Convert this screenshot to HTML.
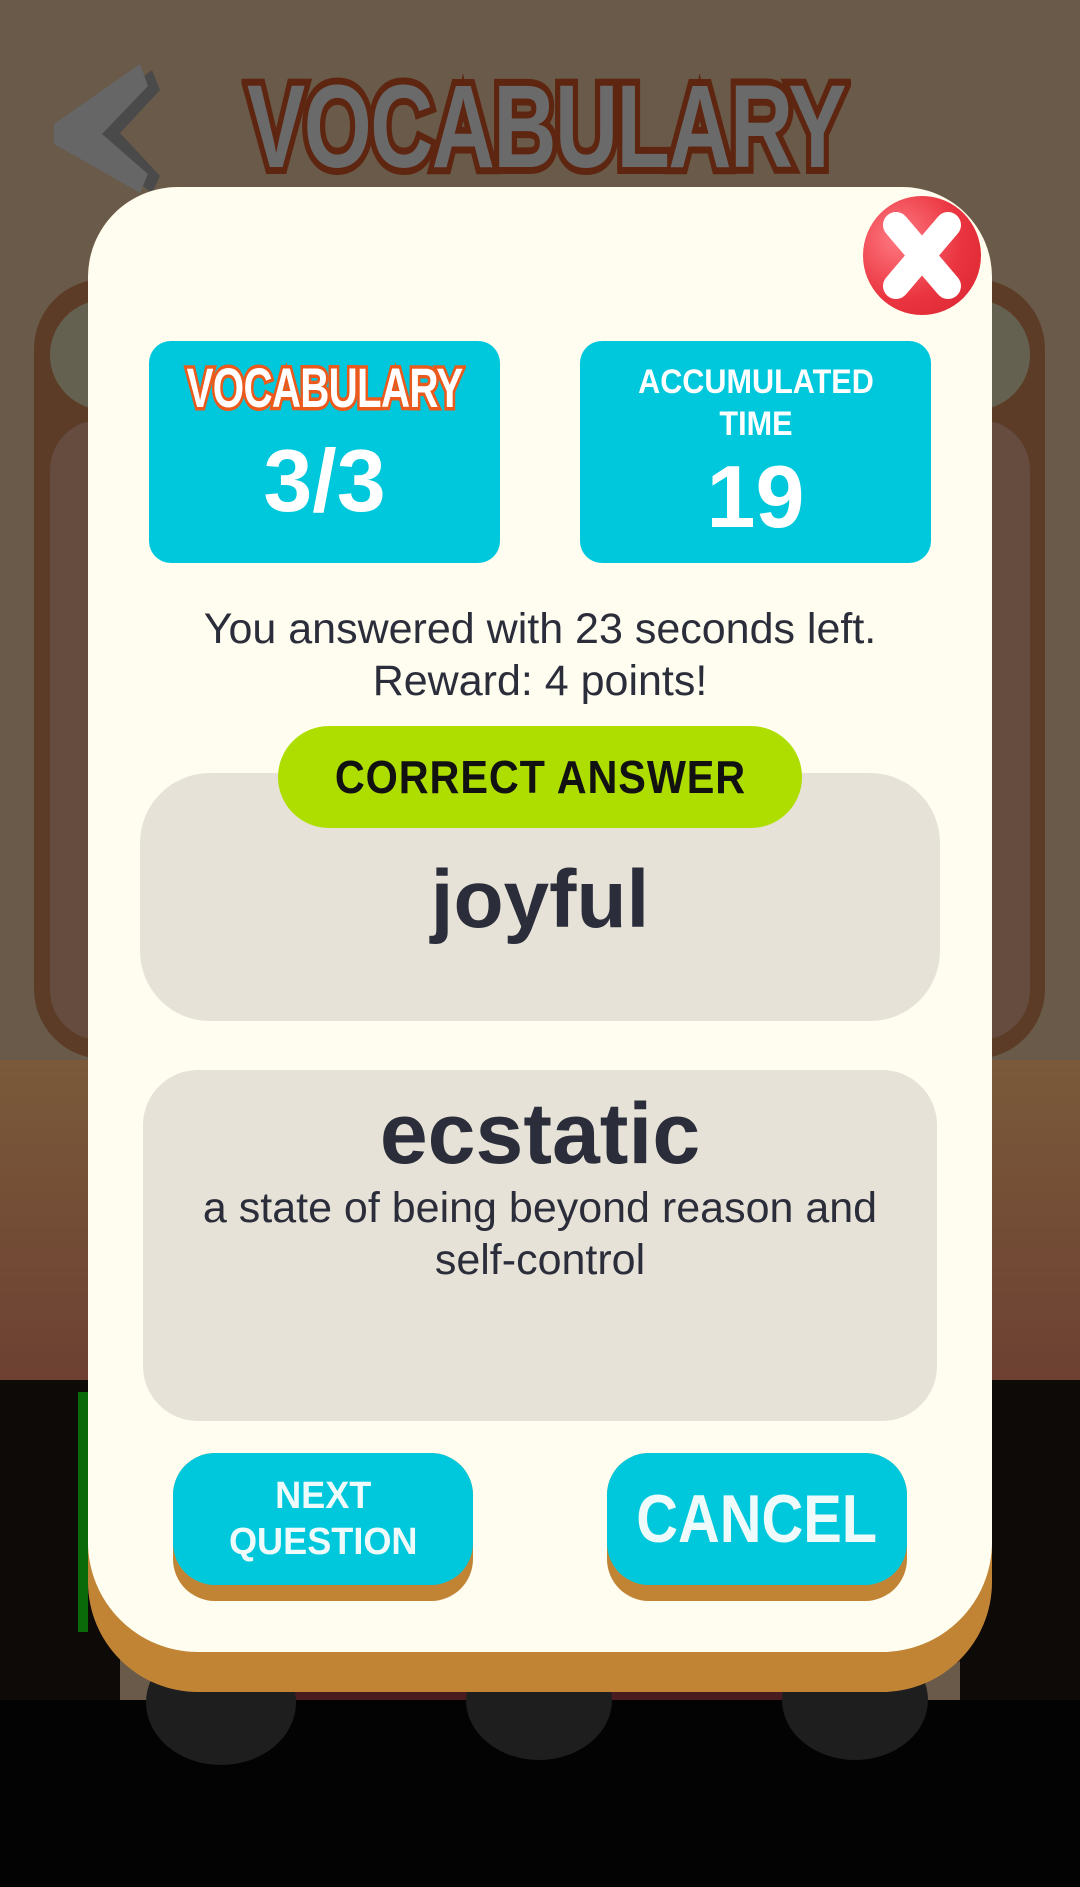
<!DOCTYPE html>
<html><head><meta charset="utf-8"><style>
*{margin:0;padding:0;box-sizing:border-box}
body{width:1080px;height:1887px;overflow:hidden;position:relative;background:#695a49;font-family:"Liberation Sans",sans-serif}
.abs{position:absolute}
.title{left:247px;top:70px;width:590px;height:115px;font:bold 118px "Liberation Sans",sans-serif;color:#6a6a6a;-webkit-text-stroke:14px #5e2610;paint-order:stroke fill;letter-spacing:-2px;transform:scaleX(0.74);transform-origin:left top;white-space:nowrap;line-height:115px}
.card{border-radius:22px;background:#00c8dc;color:#fff;text-align:center}
.disp{font-weight:bold;white-space:nowrap;display:inline-block}
.gray{background:#e6e2d7}
.btn{border-radius:42px;background:#c18435}
.btn .top{position:absolute;left:0;top:0;right:0;height:132px;border-radius:42px;background:#00c8dc;color:#effafb;text-align:center}
</style></head><body>
<!-- background -->
<div class="abs" style="left:34px;top:279px;width:1011px;height:780px;border-radius:70px;background:#5d3c27"></div>
<div class="abs" style="left:50px;top:300px;width:980px;height:110px;border-radius:55px;background:#656150"></div>
<div class="abs" style="left:50px;top:420px;width:980px;height:620px;border-radius:50px;background:#654c3e"></div>
<div class="abs" style="left:0;top:1060px;width:1080px;height:400px;background:linear-gradient(#7a5a3a,#6a3a30)"></div>
<div class="abs" style="left:100px;top:1520px;width:900px;height:200px;border-radius:50%;background:#4a1c22"></div>
<div class="abs" style="left:0;top:1700px;width:1080px;height:187px;background:#030303"></div>
<div class="abs" style="left:0;top:1380px;width:120px;height:320px;background:#0e0a08"></div>
<div class="abs" style="left:960px;top:1380px;width:120px;height:320px;background:#0e0a08"></div>
<div class="abs" style="left:146px;top:1640px;width:150px;height:125px;border-radius:50%;background:#1e1e1e"></div>
<div class="abs" style="left:466px;top:1640px;width:146px;height:120px;border-radius:50%;background:#1e1e1e"></div>
<div class="abs" style="left:782px;top:1640px;width:146px;height:120px;border-radius:50%;background:#1e1e1e"></div>
<div class="abs" style="left:78px;top:1392px;width:10px;height:240px;background:#0a6a0a"></div>
<svg class="abs" style="left:48px;top:58px" width="115" height="135"><path d="M104 12 L24 75 L104 135 L112 118 L72 75 L112 32 Z" fill="#4a4a4a"/><path d="M92 6 L6 66 L6 86 L92 135 L100 116 L54 76 L100 28 Z" fill="#666"/></svg>
<div class="abs title">VOCABULARY</div>

<!-- modal -->
<div class="abs" style="left:88px;top:187px;width:904px;height:1505px;border-radius:90px 90px 110px 110px;background:#c18435"></div>
<div class="abs" style="left:88px;top:187px;width:904px;height:1465px;border-radius:90px 90px 110px 110px;background:#fefdf0"></div>

<!-- close -->
<div class="abs" style="left:863px;top:196px;width:118px;height:119px;border-radius:50%;background:radial-gradient(circle at 30% 35%,#ff7a82,#ea3540 55%,#d8242e)"></div>
<svg class="abs" style="left:863px;top:196px" width="118" height="119"><path d="M33 29 L85 90 M85 29 L33 90" stroke="#fff" stroke-width="26" stroke-linecap="round"/></svg>

<!-- stat cards -->
<div class="abs card" style="left:149px;top:341px;width:351px;height:222px">
 <div style="margin:14px -100px 0;text-align:center;height:62px"><span class="disp" style="font-size:56px;color:#fff;-webkit-text-stroke:7px #ea5a1c;paint-order:stroke fill;transform:scaleX(0.72);letter-spacing:-1px">VOCABULARY</span></div>
 <div style="font-size:88px;font-weight:bold;line-height:100px;margin-top:14px">3/3</div>
</div>
<div class="abs card" style="left:580px;top:341px;width:351px;height:222px">
 <div class="disp" style="margin-top:20px;font-size:34px;line-height:42px;transform:scaleX(0.9)">ACCUMULATED<br>TIME</div>
 <div style="font-size:88px;font-weight:bold;line-height:100px;margin-top:2px">19</div>
</div>

<div class="abs" style="left:60px;top:603px;width:960px;text-align:center;font-size:43px;line-height:52px;color:#2b2d3a">You answered with 23 seconds left.<br>Reward: 4 points!</div>

<div class="abs gray" style="left:140px;top:773px;width:800px;height:248px;border-radius:70px"></div>
<div class="abs" style="left:278px;top:726px;width:524px;height:102px;border-radius:51px;background:#aedd00;text-align:center;line-height:102px"><span class="disp" style="font-size:46px;color:#111;transform:scaleX(0.9);letter-spacing:1px">CORRECT ANSWER</span></div>
<div class="abs" style="left:140px;top:850px;width:800px;text-align:center;font-size:82px;font-weight:bold;color:#2b2d3a;line-height:100px">joyful</div>

<div class="abs gray" style="left:143px;top:1070px;width:794px;height:351px;border-radius:55px"></div>
<div class="abs" style="left:143px;top:1084px;width:794px;text-align:center;font-size:86px;font-weight:bold;color:#2b2d3a;line-height:100px">ecstatic</div>
<div class="abs" style="left:103px;top:1182px;width:874px;text-align:center;font-size:43px;color:#2b2d3a;line-height:52px">a state of being beyond reason and<br>self-control</div>

<div class="abs btn" style="left:173px;top:1453px;width:300px;height:148px"><div class="top"><div class="disp" style="font-size:38px;line-height:46px;margin-top:20px;transform:scaleX(0.95)">NEXT<br>QUESTION</div></div></div>
<div class="abs btn" style="left:607px;top:1453px;width:300px;height:148px"><div class="top"><div class="disp" style="font-size:68px;line-height:132px;transform:scaleX(0.85)">CANCEL</div></div></div>
</body></html>
